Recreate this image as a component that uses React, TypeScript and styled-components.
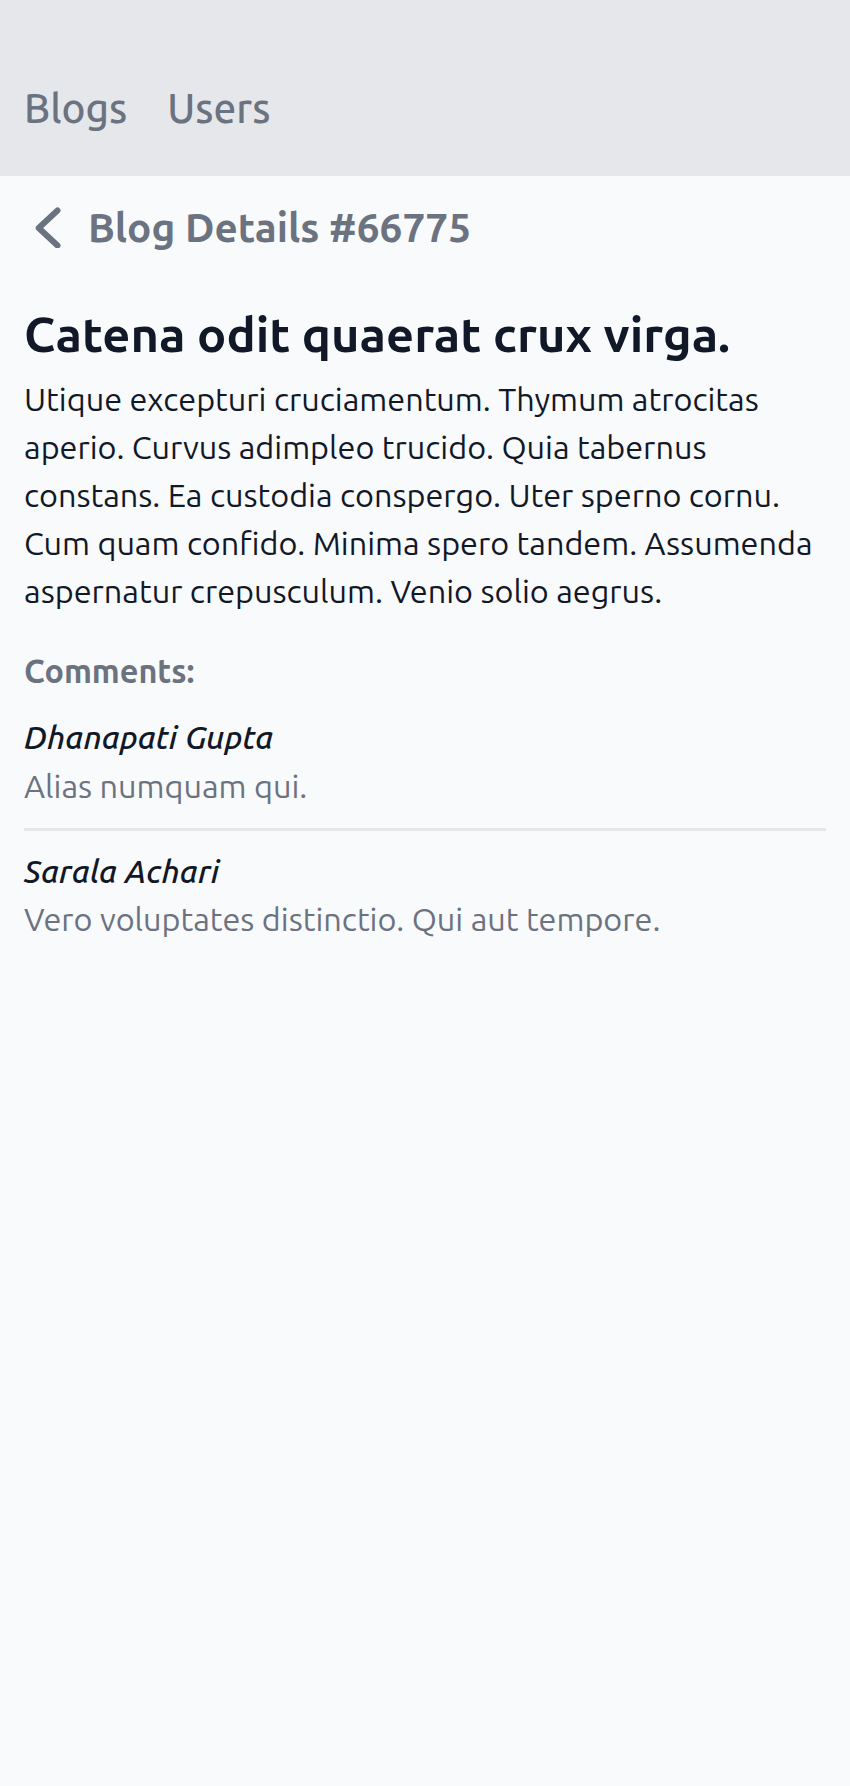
import React from 'react';
import styled, { createGlobalStyle } from 'styled-components';

const GlobalStyle = createGlobalStyle`
  html, body {
    margin: 0;
    padding: 0;
    background: #f9fafb;
    font-family: "Ubuntu", "Open Sans", "Noto Sans", sans-serif;
  }
  * {
    box-sizing: border-box;
  }
`;

interface Comment {
  id: number;
  author: string;
  text: string;
}

const comments: Comment[] = [
  { id: 1, author: 'Dhanapati Gupta', text: 'Alias numquam qui.' },
  { id: 2, author: 'Sarala Achari', text: 'Vero voluptates distinctio. Qui aut tempore.' },
];

const ChevronLeft: React.FC = () => (
  <svg width="32" height="46" viewBox="0 0 32 46" fill="none">
    <polyline
      points="27.5,8.5 8.7,26 27.5,43.5"
      stroke="#6b7280"
      strokeWidth="6"
      strokeLinecap="round"
      strokeLinejoin="round"
    />
  </svg>
);

export default function App() {
  return (
    <>
      <GlobalStyle />
      <Header>
        <Nav>
          <NavLink href="#">Blogs</NavLink>
          <NavLink href="#">Users</NavLink>
        </Nav>
      </Header>
      <Main>
        <BackRow>
          <BackButton aria-label="Back">
            <ChevronLeft />
          </BackButton>
          <PageTitle>Blog Details #66775</PageTitle>
        </BackRow>
        <BlogTitle>Catena odit quaerat crux virga.</BlogTitle>
        <BlogBody>
          Utique excepturi cruciamentum. Thymum atrocitas aperio. Curvus adimpleo trucido. Quia tabernus
          constans. Ea custodia conspergo. Uter sperno cornu. Cum quam confido. Minima spero tandem.
          Assumenda aspernatur crepusculum. Venio solio aegrus.
        </BlogBody>
        <CommentsHeading>Comments:</CommentsHeading>
        <CommentList>
          {comments.map((c) => (
            <CommentItem key={c.id}>
              <Author>{c.author}</Author>
              <CommentText>{c.text}</CommentText>
            </CommentItem>
          ))}
        </CommentList>
      </Main>
    </>
  );
}

const Header = styled.header`
  background: #e5e7eb;
  height: 176px;
  padding: 0 24px 38px;
  display: flex;
  align-items: flex-end;
`;

const Nav = styled.nav`
  display: flex;
  gap: 40px;
`;

const NavLink = styled.a`
  color: #6b7280;
  font-size: 40.5px;
  font-weight: 500;
  line-height: 60px;
  text-decoration: none;
`;

const Main = styled.main`
  padding: 0 24px;
`;

const BackRow = styled.div`
  display: flex;
  align-items: center;
  gap: 26px;
  margin-top: 21px;
`;

const BackButton = styled.button`
  border: none;
  background: none;
  padding: 0;
  margin: 0 0 4px 6px;
  display: flex;
  cursor: pointer;
`;

const PageTitle = styled.h2`
  margin: 0;
  color: #6b7280;
  font-size: 40.5px;
  font-weight: 700;
  line-height: 60px;
`;

const BlogTitle = styled.h1`
  margin: 48px 0 0;
  color: #111827;
  font-size: 48.8px;
  font-weight: 700;
  line-height: 58.6px;
`;

const BlogBody = styled.p`
  margin: 11px 0 0;
  color: #111827;
  font-size: 32.4px;
  line-height: 48px;
`;

const CommentsHeading = styled.h3`
  margin: 32px 0 0;
  color: #6b7280;
  font-size: 32.4px;
  font-weight: 700;
  line-height: 48.6px;
`;

const CommentList = styled.ul`
  list-style: none;
  margin: 18px 0 0;
  padding: 0;
`;

const CommentItem = styled.li`
  padding-bottom: 18px;
  border-bottom: 3px solid #e5e7eb;
  margin-bottom: 16px;

  &:last-child {
    border-bottom: none;
  }
`;

const Author = styled.div`
  color: #111827;
  font-size: 32.4px;
  font-style: italic;
  font-weight: 500;
  line-height: 48.6px;
`;

const CommentText = styled.div`
  color: #6b7280;
  font-size: 32.4px;
  line-height: 48px;
`;
